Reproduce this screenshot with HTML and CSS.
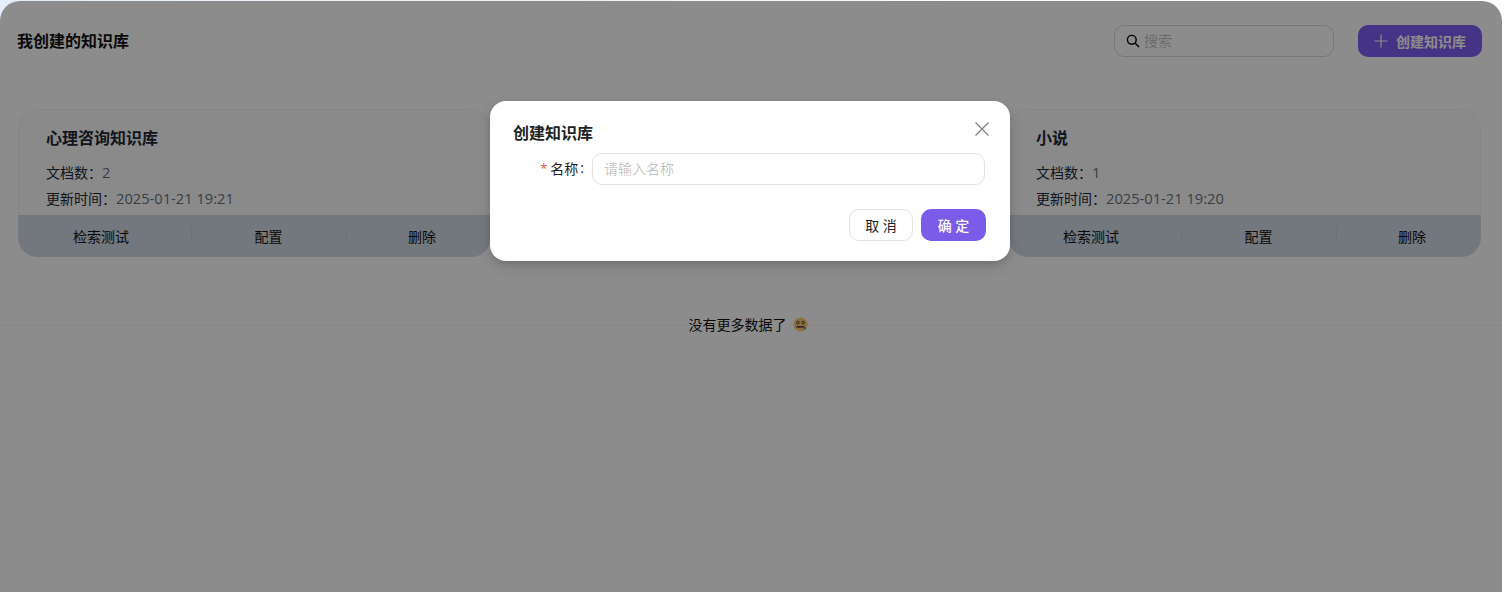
FILE: index.html
```html
<!DOCTYPE html>
<html lang="zh-CN">
<head>
<meta charset="utf-8">
<title>我创建的知识库</title>
<link rel="stylesheet" href="styles.css">
</head>
<body>
<main class="panel">
  <header class="top">
    <h1 class="top-title">我创建的知识库</h1>
    <div class="top-actions">
      <label class="search">
        <svg class="search-icon" viewBox="0 0 14 14" width="14" height="14"><circle cx="5.8" cy="5.8" r="4.4" fill="none" stroke="#000" stroke-width="1.4"/><path d="M9 9l4 4" stroke="#000" stroke-width="1.5" fill="none"/></svg>
        <input class="search-input" type="text" placeholder="搜索">
      </label>
      <button class="create" type="button">
        <svg viewBox="0 0 14 14" width="14" height="14"><path d="M7 .5v13M.5 7h13" stroke="currentColor" stroke-width="1.2" fill="none"/></svg>
        <span>创建知识库</span>
      </button>
    </div>
  </header>
  <section class="cards">
    <article class="card">
      <div class="card-body">
        <h2 class="card-title">心理咨询知识库</h2>
        <p class="meta">文档数：<span class="val">2</span></p>
        <p class="meta">更新时间：<span class="val">2025-01-21 19:21</span></p>
      </div>
      <div class="card-foot">
        <span class="act act-a">检索测试</span><i class="sep"></i><span class="act act-b">配置</span><i class="sep"></i><span class="act act-c">删除</span>
      </div>
    </article>
    <article class="card"></article>
    <article class="card">
      <div class="card-body">
        <h2 class="card-title">小说</h2>
        <p class="meta">文档数：<span class="val">1</span></p>
        <p class="meta">更新时间：<span class="val">2025-01-21 19:20</span></p>
      </div>
      <div class="card-foot">
        <span class="act act-a">检索测试</span><i class="sep"></i><span class="act act-b">配置</span><i class="sep"></i><span class="act act-c">删除</span>
      </div>
    </article>
  </section>
  <div class="end">
    <span class="end-text">没有更多数据了
      <svg class="emoji" viewBox="0 0 16 16" width="15" height="15"><circle cx="8" cy="8" r="7.5" fill="#ffcf7a"/><circle cx="5.2" cy="6" r="1.5" fill="none" stroke="#4d3a1c" stroke-width="1"/><circle cx="10.8" cy="6" r="1.5" fill="none" stroke="#4d3a1c" stroke-width="1"/><path d="M3.5 10.5h8.5" stroke="#6d6256" stroke-width="1.8"/><path d="M5 9.5v2M7 9.5v2M9 9.5v2M11 9.5v2" stroke="#3f3428" stroke-width=".6"/><rect x="11.5" y="10.5" width="2" height="2.5" fill="#7d7468"/></svg>
    </span>
  </div>
  <div class="mask"></div>
</main>
<div class="modal-wrap">
  <div class="modal" role="dialog">
    <svg class="close" viewBox="0 0 14 14" width="14" height="14"><path d="M.5.5l13 13M13.5.5l-13 13" stroke="#000" stroke-opacity=".5" stroke-width="1.2" fill="none"/></svg>
    <h3 class="modal-title">创建知识库</h3>
    <div class="field">
      <label class="field-label"><span class="req">*</span><span>名称</span><span class="colon">:</span></label>
      <input class="field-input" type="text" placeholder="请输入名称">
    </div>
    <div class="modal-foot">
      <button class="btn" type="button">取 消</button>
      <button class="btn btn-primary" type="button">确 定</button>
    </div>
  </div>
</div>
</body>
</html>
```
FILE: styles.css
```css
* { box-sizing: border-box; }
html, body { margin: 0; height: 100%; }
body {
  position: relative;
  overflow: hidden;
  padding: 1px 4px 0 0;
  background: linear-gradient(90deg, #e3eef8 0%, #f4f7fb 50%, #ffffff 100%);
  font-family: "Open Sans", "Noto Sans CJK SC", sans-serif;
  color: #000;
  font-size: 14px;
}
.panel {
  position: relative;
  height: 591px;
  background: #fff;
  border-radius: 20px 20px 0 0;
  overflow: hidden;
}
.top {
  display: flex;
  justify-content: space-between;
  align-items: center;
  padding: 24px 20px 0 17px;
}
.top-title {
  margin: 0;
  font-size: 16px;
  font-weight: 700;
  line-height: 32px;
  color: #111;
}
.top-actions { display: flex; gap: 24px; }
.search {
  display: flex;
  align-items: center;
  gap: 4px;
  width: 220px;
  height: 32px;
  padding: 0 11px;
  border: 1px solid #d9d9d9;
  border-radius: 10px;
}
.search-input {
  flex: 1;
  min-width: 0;
  height: 28px;
  margin-bottom: 2px;
  border: 0;
  outline: 0;
  padding: 0;
  background: transparent;
  font: inherit;
}
.search-input::placeholder, .field-input::placeholder { color: rgba(0,0,0,.25); }
.create {
  display: flex;
  align-items: center;
  justify-content: center;
  gap: 8px;
  width: 124px;
  height: 32px;
  border: 0;
  border-radius: 10px;
  background: #7f5ef3;
  color: #fff;
  font: 700 14px "Open Sans", "Noto Sans CJK SC", sans-serif;
}
.cards {
  display: grid;
  grid-template-columns: repeat(3, 1fr);
  gap: 22px;
  padding: 0 21px 0 18px;
  margin-top: 52px;
}
.card {
  height: 148px;
  border-radius: 20px;
  background: #fbfcfd;
  overflow: hidden;
  display: flex;
  flex-direction: column;
}
.card-body {
  height: 106px;
  padding: 16px 27px 0;
  border: 1px solid #f3f3f3;
  border-bottom: 0;
  border-radius: 20px 20px 0 0;
}
.card-title {
  margin: 0 0 10px;
  font-size: 16px;
  font-weight: 700;
  line-height: 24px;
  color: #1f2937;
}
.meta { margin: 0; line-height: 26px; color: #1f2937; }
.val { color: #6b7280; font-size: 14.7px; line-height: 1; }
.card-foot {
  display: flex;
  height: 42px;
  align-items: center;
  background: #d2d9e6;
}
.act { text-align: center; line-height: 22px; color: #111; padding-top: 1px; }
.act-a { width: 173px; padding-right: 7px; }
.act-b { width: 154px; padding-right: 1px; }
.act-c { flex: 1; padding-left: 6px; }
.sep { width: 1px; height: 13px; margin-bottom: 3px; background: #c6ccd8; }
.end {
  display: flex;
  justify-content: center;
  align-items: center;
  height: 20px;
  margin-top: 58px;
  background: linear-gradient(#0000 10px, #f5f5f5 10px, #f5f5f5 11px, #0000 11px);
}
.end-text {
  display: flex;
  align-items: center;
  gap: 6px;
  background: #fff;
  color: #111;
  margin-right: 6px;
  margin-bottom: 2px;
}
.mask {
  position: absolute;
  inset: 0;
  background: rgba(0,0,0,.45);
}
.modal-wrap {
  position: absolute;
  inset: 0 6px 0 0;
  display: flex;
  justify-content: center;
  align-items: flex-start;
  padding-top: 101px;
}
.modal {
  position: relative;
  width: 520px;
  height: 160px;
  background: #fff;
  border-radius: 16px;
  padding: 20px 24px 20px 23px;
  box-shadow: 0 6px 16px rgba(0,0,0,.08), 0 3px 6px rgba(0,0,0,.12);
}
.close { position: absolute; top: 21px; right: 21px; }
.modal-title {
  margin: 0 0 8px;
  font-size: 16px;
  font-weight: 700;
  line-height: 24px;
  color: #222;
}
.field { display: flex; align-items: center; gap: 8px; }
.field-label {
  display: flex;
  justify-content: flex-end;
  align-items: center;
  width: 71px;
  height: 32px;
  margin-top: -2px;
  color: #222;
}
.req { margin-right: 3px; font-size: 13px; color: #e0532f; }
.colon { margin-left: 2px; margin-bottom: 1px; }
.field-input {
  width: 393px;
  height: 32px;
  border: 1px solid #e2e2e2;
  border-radius: 10px;
  padding: 0 11px 2px;
  outline: 0;
  font: inherit;
}
.modal-foot {
  display: flex;
  justify-content: flex-end;
  gap: 8px;
  margin-top: 24px;
}
.btn {
  width: 64px;
  height: 32px;
  border: 1px solid #e2e2e2;
  border-radius: 10px;
  background: #fff;
  color: #222;
  font: 14px "Open Sans", "Noto Sans CJK SC", sans-serif;
}
.btn-primary { width: 65px; border: 0; background: #7b5ce8; color: #fff; font-weight: 500; }
```
